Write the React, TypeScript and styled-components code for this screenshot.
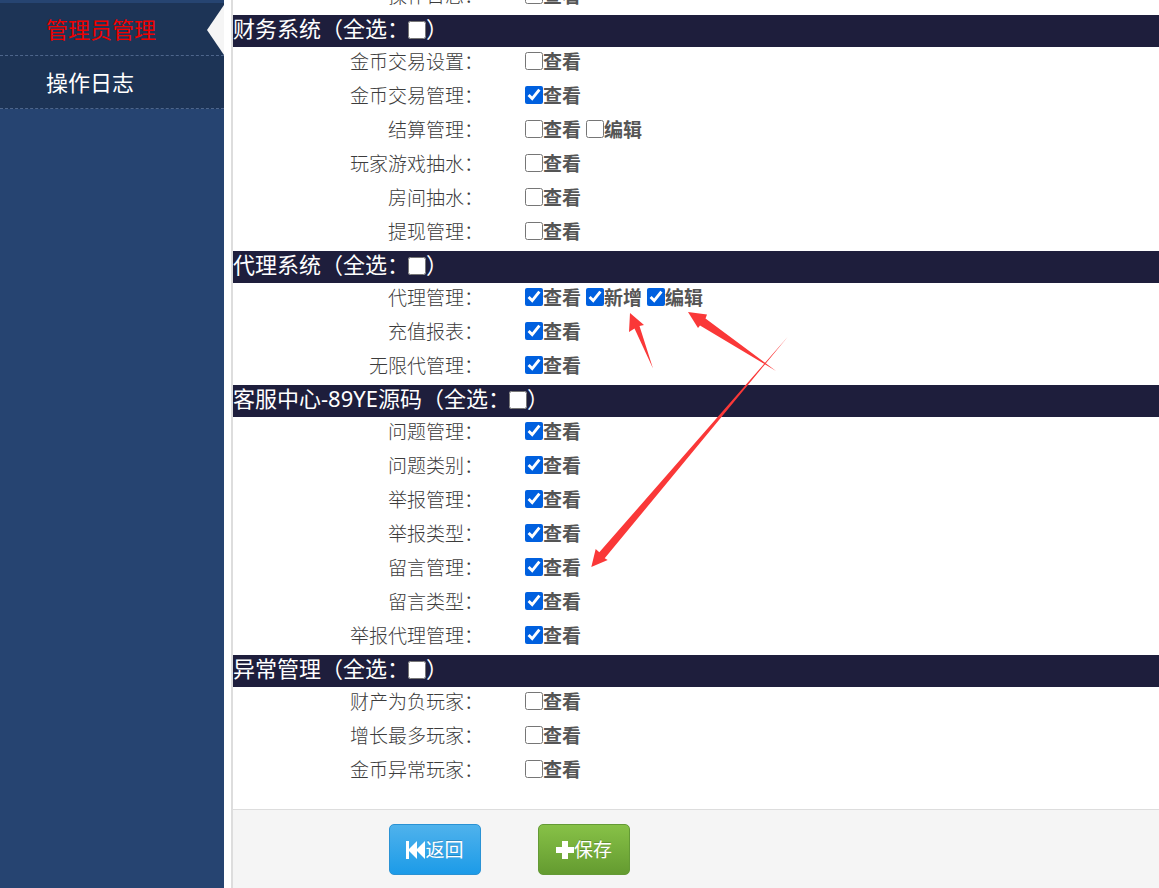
import React from "react";
import styled, { createGlobalStyle } from "styled-components";

const GlobalStyle = createGlobalStyle`
  *, *::before, *::after { box-sizing: border-box; }
  body {
    margin: 0;
    background: #fff;
    color: #555;
    font: 19px/30px "Noto Sans", "Noto Sans CJK SC", sans-serif;
  }
`;

const Page = styled.div`
  display: flex;
  min-height: 100vh;
  overflow: hidden;
`;

const Sidebar = styled.nav`
  flex: 0 0 224px;
  padding-top: 3px;
  background: #264471;
`;

const MenuLink = styled.a<{ $active?: boolean }>`
  position: relative;
  display: block;
  padding: 10px 46px;
  border-bottom: 1px dashed #4e668c;
  background: #1d3456;
  color: ${(p) => (p.$active ? "#f00000" : "#fff")};
  font-size: 22px;
  line-height: 32px;
  text-decoration: none;
`;

const Notch = styled.span`
  position: absolute;
  top: 2px;
  right: 0;
  border: solid transparent;
  border-width: 25px 17px 25px 0;
  border-right-color: #f5f5f5;
`;

const Main = styled.main`
  position: relative;
  flex: 1;
  min-width: 0;
  display: flex;
  flex-direction: column;
  margin-left: 7px;
  border-left: 2px solid #ddd;
`;

const Form = styled.form`
  flex: 1;
  display: flex;
  flex-direction: column;
`;

const Scrolled = styled.div`
  flex: 1;
  margin-top: -19px;
  padding-bottom: 20px;
`;

const Checkbox = styled.input.attrs({ type: "checkbox" })`
  width: 18px;
  height: 18px;
  margin: 0 0 2px;
  accent-color: #0060df;
`;

const GroupTitle = styled.h2`
  height: 32px;
  margin: 0;
  background: #1e1e3c;
  color: #fff;
  font-size: 22px;
  font-weight: 400;
  line-height: 26px;
`;

const TitleLabel = styled.label`
  display: inline-flex;
  align-items: center;

  ${Checkbox} {
    margin: 3px 0 0 -1px;
  }
`;

const Row = styled.div`
  display: flex;
  gap: 42px;
  height: 34px;
`;

const RowLabel = styled.span`
  width: 250px;
  color: #3c3c3c;
  text-align: right;
  font-weight: 300;
`;

const Options = styled.div`
  display: flex;
  gap: 5px;
`;

const Option = styled.label`
  display: flex;
  align-items: center;
  height: 30px;
  font-weight: 700;
`;

const Footer = styled.footer`
  display: flex;
  gap: 57px;
  padding: 14px 0 13px 156px;
  border-top: 1px solid #ddd;
  background: #f5f5f5;
`;

const Button = styled.button<{ $tone: "blue" | "green" }>`
  display: flex;
  align-items: center;
  justify-content: center;
  width: 92px;
  height: 51px;
  padding: 0;
  border: 1px solid ${(p) => (p.$tone === "blue" ? "#2a92d4" : "#649a35")};
  border-radius: 5px;
  background: ${(p) =>
    p.$tone === "blue"
      ? "linear-gradient(#4fb2ec, #1c9be8)"
      : "linear-gradient(#87c147, #649b30)"};
  color: #fff;
  font: inherit;
  text-shadow: 0 -1px 0 rgba(0, 0, 0, 0.2);
`;

const Annotations = styled.svg`
  position: absolute;
  top: 300px;
  left: 347px;
  pointer-events: none;
`;

type Item = [label: string, options: [name: string, checked: boolean][]];

const groups: { title?: string; items: Item[] }[] = [
  { items: [["操作日志", [["查看", false]]]] },
  {
    title: "财务系统",
    items: [
      ["金币交易设置", [["查看", false]]],
      ["金币交易管理", [["查看", true]]],
      ["结算管理", [["查看", false], ["编辑", false]]],
      ["玩家游戏抽水", [["查看", false]]],
      ["房间抽水", [["查看", false]]],
      ["提现管理", [["查看", false]]],
    ],
  },
  {
    title: "代理系统",
    items: [
      ["代理管理", [["查看", true], ["新增", true], ["编辑", true]]],
      ["充值报表", [["查看", true]]],
      ["无限代管理", [["查看", true]]],
    ],
  },
  {
    title: "客服中心-89YE源码",
    items: [
      ["问题管理", [["查看", true]]],
      ["问题类别", [["查看", true]]],
      ["举报管理", [["查看", true]]],
      ["举报类型", [["查看", true]]],
      ["留言管理", [["查看", true]]],
      ["留言类型", [["查看", true]]],
      ["举报代理管理", [["查看", true]]],
    ],
  },
  {
    title: "异常管理",
    items: [
      ["财产为负玩家", [["查看", false]]],
      ["增长最多玩家", [["查看", false]]],
      ["金币异常玩家", [["查看", false]]],
    ],
  },
];

export default function App() {
  return (
    <Page>
      <GlobalStyle />
      <Sidebar>
        <MenuLink href="#admins" $active>
          管理员管理
          <Notch />
        </MenuLink>
        <MenuLink href="#logs">操作日志</MenuLink>
      </Sidebar>
      <Main>
        <Form onSubmit={(e) => e.preventDefault()}>
          <Scrolled>
            {groups.map((group, i) => (
              <section key={i}>
                {group.title && (
                  <GroupTitle>
                    <TitleLabel>
                      {group.title}（全选：
                      <Checkbox />）
                    </TitleLabel>
                  </GroupTitle>
                )}
                {group.items.map(([label, options]) => (
                  <Row key={label} role="group" aria-label={label}>
                    <RowLabel>{label}：</RowLabel>
                    <Options>
                      {options.map(([name, checked]) => (
                        <Option key={name}>
                          <Checkbox defaultChecked={checked} />
                          {name}
                        </Option>
                      ))}
                    </Options>
                  </Row>
                ))}
              </section>
            ))}
          </Scrolled>
          <Footer>
            <Button type="button" $tone="blue">
              <svg width="19" height="18" viewBox="0 0 19 18" fill="#fff" aria-hidden="true">
                <path d="M0 0h3v8L11 0v8L19 0v18l-8-8v8L3 10v8H0z" />
              </svg>
              返回
            </Button>
            <Button type="submit" $tone="green">
              <svg width="18" height="18" viewBox="0 0 18 18" fill="#fff" aria-hidden="true">
                <path d="M6 0h6v6h6v6h-6v6H6v-6H0V6h6z" />
              </svg>
              保存
            </Button>
          </Footer>
        </Form>
        <Annotations width="220" height="280" viewBox="580 300 220 280" fill="#fa3838" aria-hidden="true">
          <path d="M630 313 629 332 634.500 328.500 653 368.500 639.500 326 644 325z" />
          <path d="M688 312 707 314.500 705.500 318.500 776 371 700 325.500 698 328z" />
          <path d="M591.300 567 595.700 549 599.300 552.300 788 336.500 604.700 558.300 607.700 560z" />
        </Annotations>
      </Main>
    </Page>
  );
}
